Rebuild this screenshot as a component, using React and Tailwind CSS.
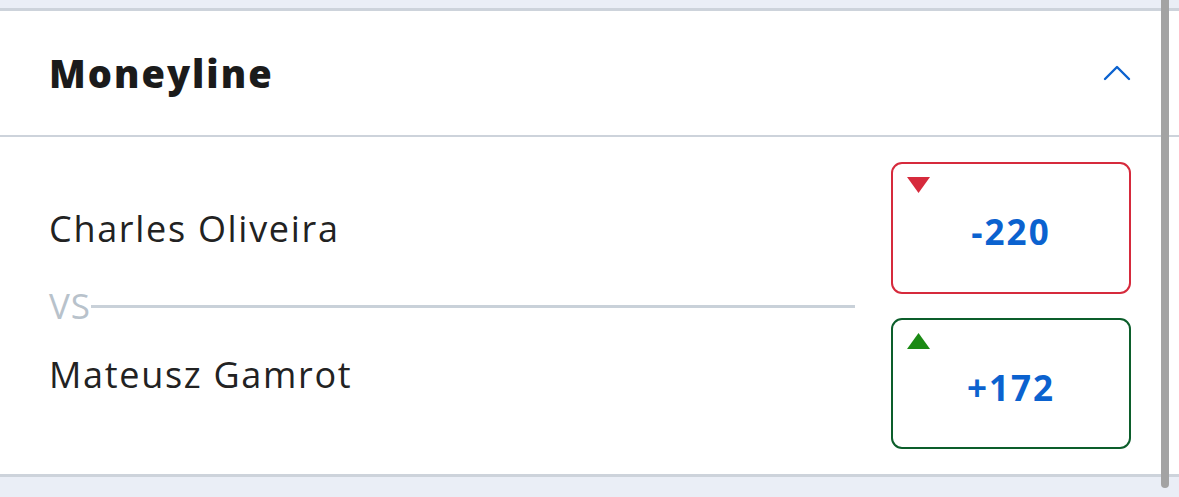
import React from 'react';

const OddsButton = ({ value, dir }) => {
  const up = dir === 'up';
  return (
    <button
      className={`relative w-[240px] h-[132px] rounded-[11px] border-2 bg-white flex items-center justify-center ${
        up ? 'border-[#0c5e2b]' : 'border-[#d62a3c]'
      }`}
    >
      {/* movement arrow */}
      <svg className="absolute left-[14px] top-[13px]" width="23" height="16" viewBox="0 0 23 16">
        {up ? (
          <polygon points="11.5,0 23,16 0,16" fill="#1b8a14" />
        ) : (
          <polygon points="0,0 23,0 11.5,16" fill="#d62a3c" />
        )}
      </svg>
      <span className="mt-[9px] text-[35px] leading-[40px] font-bold tracking-[2px] text-[#0b62cf]">{value}</span>
    </button>
  );
};

const App = () => {
  return (
    <div className="relative w-full h-[497px] bg-[#eaeef6] pt-[8px] overflow-hidden" style={{ fontFamily: '"Open Sans", Lato, sans-serif' }}>
      <div className="bg-white border-t-[3px] border-b-[3px] border-[#cdd3db]">
        {/* header */}
        <div className="h-[126px] flex items-center justify-between pl-[49px] pr-[48px] border-b-2 border-[#cdd3db]">
          <h2 className="text-[38px] leading-[44px] font-extrabold tracking-[2px] text-[#1b1b1b]">Moneyline</h2>
          <svg width="28" height="16" viewBox="0 0 28 16" fill="none">
            <path d="M2 14 L14 2 L26 14" stroke="#0b62cf" strokeWidth="2.4" strokeLinecap="round" strokeLinejoin="round" />
          </svg>
        </div>

        {/* fighters */}
        <div className="flex pl-[49px] pr-[48px] h-[337px]">
          <div className="flex-1 flex flex-col">
            <div className="mt-[72px] h-[40px] leading-[40px] text-[36px] tracking-[1.7px] text-[#222]">Charles Oliveira</div>
            <div className="mt-[40px] h-[34px] flex items-center">
              <span className="text-[35px] leading-[34px] tracking-[1px] text-[#b8c2cb]">VS</span>
              <div className="flex-1 h-[3px] bg-[#c9d1d9]" />
            </div>
            <div className="mt-[32px] h-[40px] leading-[40px] text-[36px] tracking-[1.7px] text-[#222]">Mateusz Gamrot</div>
          </div>
          <div className="ml-[36px] py-[25px] flex flex-col gap-[24px]">
            <OddsButton value="-220" dir="down" />
            <OddsButton value="+172" dir="up" />
          </div>
        </div>
      </div>

      {/* scrollbar */}
      <div className="absolute top-0 left-[1161px] w-[8px] h-[488px] bg-[#a3a3a3] rounded-b-full" />
    </div>
  );
};

export default App;
